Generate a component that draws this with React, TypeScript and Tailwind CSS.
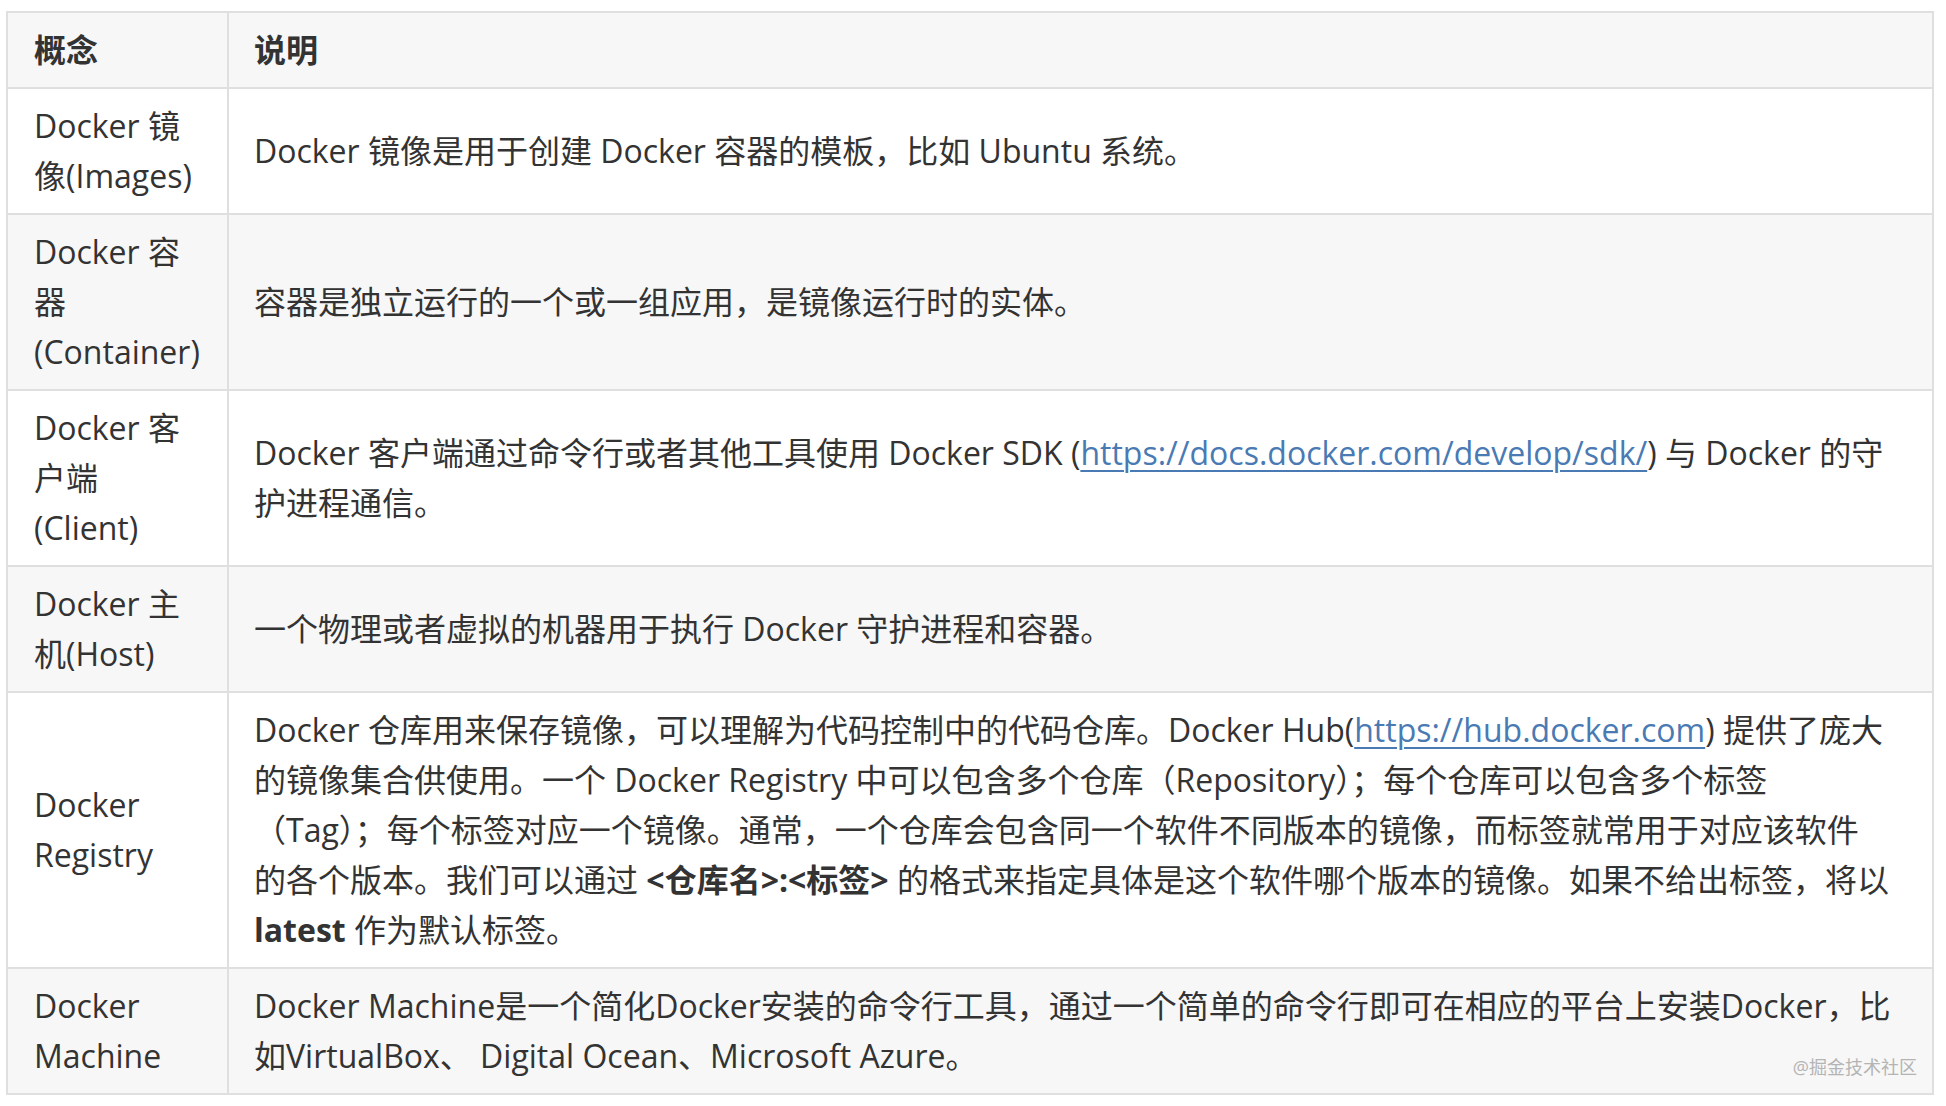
const cell =
  'border-2 border-[#dfdfdf] py-[12px] align-middle text-[32px] leading-[50px] text-[#333333]';
const left = `${cell} pl-[26px] pr-[18px]`;
const right = `${cell} pl-[25px] pr-[22px]`;
const link = 'text-[#4a7ab3] underline decoration-[2px] underline-offset-[5px]';

export default function App() {
  return (
    <div className="relative w-full h-[1106px] bg-white font-['Open_Sans','Noto_Sans_CJK_SC',sans-serif]">
      <div className="pt-[11px] pl-[6px]">
        <table className="table-fixed border-collapse w-[1928px]">
          <colgroup>
            <col className="w-[221px]" />
            <col />
          </colgroup>
          <thead>
            <tr className="bg-[#f7f7f7]">
              <th className={`${left} text-left font-bold`}>概念</th>
              <th className={`${right} text-left font-bold`}>说明</th>
            </tr>
          </thead>
          <tbody>
            <tr className="bg-white">
              <td className={left}>Docker 镜像(Images)</td>
              <td className={right}>Docker 镜像是用于创建 Docker 容器的模板，比如 Ubuntu 系统。</td>
            </tr>
            <tr className="bg-[#f7f7f7]">
              <td className={left}>
                Docker 容器
                <br />
                (Container)
              </td>
              <td className={right}>容器是独立运行的一个或一组应用，是镜像运行时的实体。</td>
            </tr>
            <tr className="bg-white">
              <td className={left}>
                Docker 客户端
                <br />
                (Client)
              </td>
              <td className={right}>
                Docker 客户端通过命令行或者其他工具使用 Docker SDK (
                <a className={link}>https://docs.docker.com/develop/sdk/</a>) 与 Docker 的守
                <br />
                护进程通信。
              </td>
            </tr>
            <tr className="bg-[#f7f7f7]">
              <td className={left}>Docker 主机(Host)</td>
              <td className={right}>一个物理或者虚拟的机器用于执行 Docker 守护进程和容器。</td>
            </tr>
            <tr className="bg-white">
              <td className={left}>
                Docker
                <br />
                Registry
              </td>
              <td className={right}>
                Docker 仓库用来保存镜像，可以理解为代码控制中的代码仓库。Docker Hub(
                <a className={link}>https://hub.docker.com</a>) 提供了庞大
                <br />
                的镜像集合供使用。一个 Docker Registry 中可以包含多个仓库（Repository）；每个仓库可以包含多个标签
                <br />
                （Tag）；每个标签对应一个镜像。通常，一个仓库会包含同一个软件不同版本的镜像，而标签就常用于对应该软件
                <br />
                的各个版本。我们可以通过 <strong className="font-bold">&lt;仓库名&gt;:&lt;标签&gt;</strong>{' '}
                的格式来指定具体是这个软件哪个版本的镜像。如果不给出标签，将以
                <br />
                <strong className="font-bold">latest</strong> 作为默认标签。
              </td>
            </tr>
            <tr className="bg-[#f7f7f7]">
              <td className={left}>
                Docker
                <br />
                Machine
              </td>
              <td className={right}>
                Docker Machine是一个简化Docker安装的命令行工具，通过一个简单的命令行即可在相应的平台上安装Docker，比
                <br />
                如VirtualBox、 Digital Ocean、Microsoft Azure。
              </td>
            </tr>
          </tbody>
        </table>
      </div>
      <div className="absolute top-[1056px] right-[29px] text-[18px] leading-[22px] text-[#b4b4b4]">
        @掘金技术社区
      </div>
    </div>
  );
}
